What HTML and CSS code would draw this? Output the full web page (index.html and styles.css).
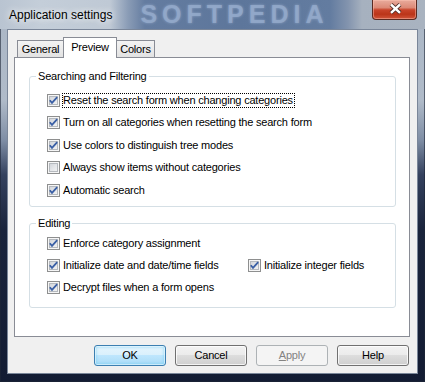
FILE: index.html
```html
<!DOCTYPE html>
<html>
<head>
<meta charset="utf-8">
<title>Application settings</title>
<link rel="stylesheet" href="styles.css">
</head>
<body>
<div class="window">
  <div class="titlebar">
    <span class="title">Application settings</span>
    <span class="watermark">SOFTPEDIA</span>
    <button class="close" aria-label="Close">
      <svg width="45" height="20" viewBox="0 0 45 20">
        <path d="M19 5.5 L28 13.8 M28 5.5 L19 13.8" stroke="#4a2a24" stroke-width="4.2" fill="none"/>
        <path d="M19 5.5 L28 13.8 M28 5.5 L19 13.8" stroke="#ffffff" stroke-width="2.4" fill="none"/>
      </svg>
    </button>
  </div>
  <div class="client">
    <div class="tabs">
      <div class="tab tab-general">General</div>
      <div class="tab tab-active">Preview</div>
      <div class="tab tab-colors">Colors</div>
    </div>
    <div class="panel">
      <fieldset class="group group-search">
        <legend>Searching and Filtering</legend>
        <div class="rows">
          <div class="row"><label class="cb"><span class="box"><svg width="11" height="11" viewBox="1 1 11 11"><path d="M2.8 6.2 L5 8.9 L10.2 3.2" /></svg></span><span class="txt focus">Reset the search form when changing categories</span></label></div>
          <div class="row"><label class="cb"><span class="box"><svg width="11" height="11" viewBox="1 1 11 11"><path d="M2.8 6.2 L5 8.9 L10.2 3.2" /></svg></span><span class="txt">Turn on all categories when resetting the search form</span></label></div>
          <div class="row"><label class="cb"><span class="box"><svg width="11" height="11" viewBox="1 1 11 11"><path d="M2.8 6.2 L5 8.9 L10.2 3.2" /></svg></span><span class="txt">Use colors to distinguish tree modes</span></label></div>
          <div class="row"><label class="cb"><span class="box"></span><span class="txt">Always show items without categories</span></label></div>
          <div class="row"><label class="cb"><span class="box"><svg width="11" height="11" viewBox="1 1 11 11"><path d="M2.8 6.2 L5 8.9 L10.2 3.2" /></svg></span><span class="txt">Automatic search</span></label></div>
        </div>
      </fieldset>
      <fieldset class="group group-edit">
        <legend>Editing</legend>
        <div class="rows">
          <div class="row row-edit"><label class="cb"><span class="box"><svg width="11" height="11" viewBox="1 1 11 11"><path d="M2.8 6.2 L5 8.9 L10.2 3.2" /></svg></span><span class="txt">Enforce category assignment</span></label></div>
          <div class="row row-edit"><label class="cb col1"><span class="box"><svg width="11" height="11" viewBox="1 1 11 11"><path d="M2.8 6.2 L5 8.9 L10.2 3.2" /></svg></span><span class="txt">Initialize date and date/time fields</span></label><label class="cb"><span class="box"><svg width="11" height="11" viewBox="1 1 11 11"><path d="M2.8 6.2 L5 8.9 L10.2 3.2" /></svg></span><span class="txt">Initialize integer fields</span></label></div>
          <div class="row row-edit"><label class="cb"><span class="box"><svg width="11" height="11" viewBox="1 1 11 11"><path d="M2.8 6.2 L5 8.9 L10.2 3.2" /></svg></span><span class="txt">Decrypt files when a form opens</span></label></div>
        </div>
      </fieldset>
    </div>
    <div class="buttons">
      <button class="btn btn-default">OK</button>
      <button class="btn">Cancel</button>
      <button class="btn btn-disabled"><u>A</u>pply</button>
      <button class="btn">Help</button>
    </div>
  </div>
</div>
</body>
</html>
```

FILE: styles.css
```css
* { box-sizing: border-box; }
html, body { margin: 0; padding: 0; }
body {
  width: 425px;
  height: 382px;
  overflow: hidden;
  background: #101a30;
  font-family: "Liberation Sans", Arial, sans-serif;
  font-size: 11px;
  letter-spacing: -0.2px;
  color: #000;
}

.window {
  width: 425px;
  height: 382px;
  display: flex;
  flex-direction: column;
  background: linear-gradient(180deg, #aab6c5 0, #b0bbc9 100px, #7f8ea5 140px, #34415e 175px, #1a243c 230px, #131c33 100%);
  box-shadow: inset 0 0 0 1px rgba(30, 38, 55, 0.6);
}

/* ---------- title bar ---------- */
.titlebar {
  height: 29px;
  flex: none;
  display: flex;
  align-items: flex-start;
  padding: 0 8px 0 9px;
  background: linear-gradient(90deg, #b9c4d1 0, #c4ced9 40px, #bfc9d5 110px, #8a9cb6 128px, #647ca0 145px, #5d769b 240px, #637ca0 330px, #8394ae 348px, #a6b1bf 362px, #a9b3c0 100%);
}
.title {
  font-size: 12px;
  letter-spacing: 0;
  line-height: 28px;
  padding-top: 1px;
  color: #000;
  white-space: nowrap;
  text-shadow: 0 0 6px rgba(255, 255, 255, 0.9), 0 0 10px rgba(255, 255, 255, 0.7);
}
.watermark {
  margin-left: 28px;
  font-size: 25px;
  font-weight: bold;
  letter-spacing: 5px;
  line-height: 28px;
  color: rgba(150, 172, 205, 0.8);
  text-shadow: 0 0 3px rgba(150, 172, 205, 0.8);
  white-space: nowrap;
}
.close {
  margin-left: auto;
  width: 45px;
  height: 20px;
  padding: 0;
  border: 1px solid #5a2b22;
  border-top: 0;
  border-radius: 0 0 4px 4px;
  background: linear-gradient(180deg, #e9ab9c 0, #dc8a77 40%, #c8442a 52%, #bb3519 75%, #d0553a 100%);
  box-shadow: inset 0 0 0 1px rgba(255, 200, 185, 0.45);
  display: block;
}
.close svg { display: block; margin: -1px 0 0 -1px; }

/* ---------- client ---------- */
.client {
  flex: 1;
  margin: 0 7px 8px 7px;
  border: 1px solid #7a8699;
  background: #f0f0f0;
  padding: 7px 7px 7px 6px;
  display: flex;
  flex-direction: column;
}

.tabs {
  height: 20px;
  flex: none;
  display: flex;
  align-items: flex-end;
  padding-left: 3px;
}
.tab {
  height: 17px;
  padding-top: 1px;
  line-height: 15px;
  text-align: center;
  border: 1px solid #898c95;
  border-bottom: 0;
  background: linear-gradient(180deg, #f3f3f3 0, #ebebeb 50%, #e2e2e2 100%);
  white-space: nowrap;
}
.tab-general { width: 46px; border-right: 0; }
.tab-colors { width: 38px; border-left: 0; }
.tab-active {
  width: 54px;
  height: 21px;
  padding-top: 2px;
  margin-bottom: -1px;
  background: #fff;
  position: relative;
  z-index: 1;
}

.panel {
  flex: 1;
  border: 1px solid #898c95;
  background: #fff;
  padding: 12px 13px 0 14px;
}

.group {
  margin: 0;
  padding: 0;
  min-width: 0;
  border: 1px solid #d5dfe5;
  border-radius: 3px;
}
.group legend {
  margin-left: 6px;
  padding: 0 2px;
  line-height: 13px;
}
.group-edit { margin-top: 10px; }

.group-search .rows { padding: 6px 0 4px 17px; }
.group-edit .rows { padding: 3px 0 8px 17px; }

.row {
  height: 22.5px;
  display: flex;
  align-items: center;
}
.row-edit { height: 22px; }

.cb {
  display: flex;
  align-items: center;
  white-space: nowrap;
}
.col1 { width: 201px; }

.box {
  width: 13px;
  height: 13px;
  flex: none;
  border: 1px solid #8e8f8f;
  background: linear-gradient(135deg, #c9cdd3 0, #e3e5e8 50%, #f8f8f8 100%);
  box-shadow: inset 0 0 0 1px #f6f6f6, inset 0 0 0 2px #b5b9be;
  margin-right: 2px;
}
.box svg { display: block; }
.box path {
  fill: none;
  stroke: #3a5fa5;
  stroke-width: 1.8;
}

.txt {
  border: 1px dotted transparent;
  padding: 0 1px 0 0;
  line-height: 13px;
}
.txt.focus { border-color: #000; }

/* ---------- buttons ---------- */
.buttons {
  flex: none;
  display: flex;
  justify-content: flex-end;
  gap: 9px;
  margin-top: 8px;
  padding-right: 1px;
}
.btn {
  width: 72px;
  height: 21px;
  padding: 0;
  font: inherit;
  letter-spacing: inherit;
  line-height: 19px;
  color: #000;
  text-align: center;
  border: 1px solid #707070;
  border-radius: 3px;
  background: linear-gradient(180deg, #f2f2f2 0, #ebebeb 50%, #dddddd 50%, #cfcfcf 100%);
  box-shadow: inset 0 0 0 1px rgba(255, 255, 255, 0.75);
}
.btn u { text-decoration: underline; }
.btn-default {
  border-color: #3c7fb1;
  background: linear-gradient(180deg, #e6f5fd 0, #d9f0fc 50%, #bee6fd 50%, #a9dbf6 100%);
  box-shadow: inset 0 0 0 1px rgba(255, 255, 255, 0.55), inset 0 0 3px 1px rgba(90, 200, 245, 0.6);
}
.btn-disabled {
  color: #838383;
  border-color: #adb2b5;
  background: #f4f4f4;
  box-shadow: none;
}
```
